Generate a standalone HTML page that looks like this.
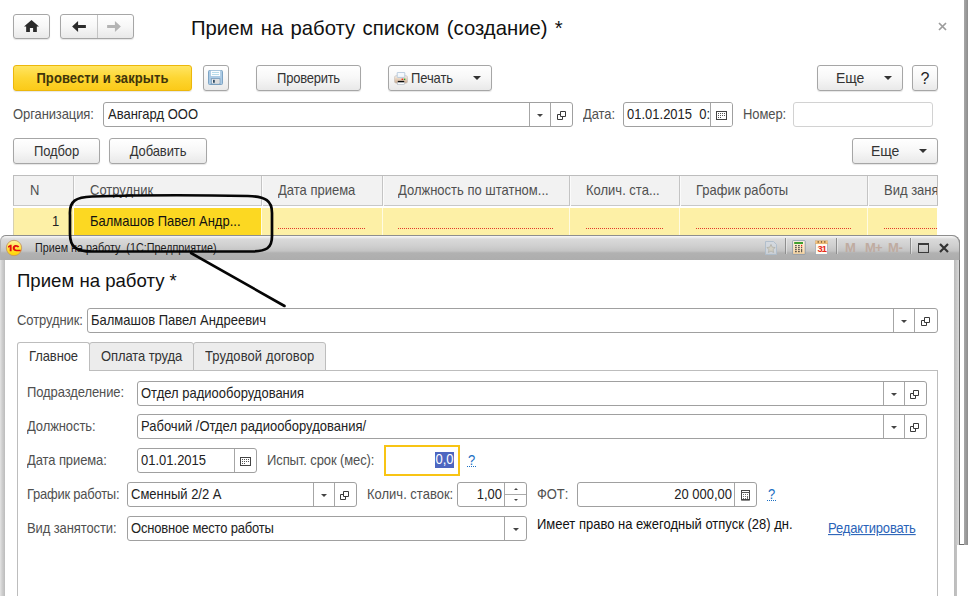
<!DOCTYPE html>
<html><head><meta charset="utf-8">
<style>
*{box-sizing:border-box;margin:0;padding:0}
html,body{width:968px;height:596px;overflow:hidden;background:#fff}
body{font-family:"Liberation Sans",sans-serif;font-size:13px;color:#333;position:relative}
.a{position:absolute}
.btn{position:absolute;border:1px solid #a6a6a6;border-radius:3px;background:linear-gradient(#ffffff 0%,#f7f7f7 50%,#e9e9e9 100%);text-align:center;color:#333;line-height:25px;height:26px;letter-spacing:-0.1px;box-shadow:0 1px 1px rgba(0,0,0,.10);white-space:nowrap}
.inp{position:absolute;border:1px solid #a0a0a0;border-radius:3px;background:#fff;height:25px;line-height:23px;color:#222;padding-left:3px;white-space:nowrap;overflow:hidden}
.lbl{position:absolute;color:#505050;white-space:nowrap;line-height:16px;letter-spacing:-0.1px;transform:scaleY(1.085);transform-origin:0 12.5px}
.sep{position:absolute;top:0;bottom:0;width:1px;background:#a6a6a6}
.tri{position:absolute;width:0;height:0;border-left:4px solid transparent;border-right:4px solid transparent;border-top:4px solid #333}
.tris{position:absolute;width:0;height:0;border-left:3px solid transparent;border-right:3px solid transparent;border-top:3px solid #444}
.q{position:absolute;color:#1b6ec2;line-height:16px;height:14px;width:9px;text-align:center;border-bottom:1px dotted #1b6ec2}
.q span{display:inline-block;line-height:16px;transform:scaleY(1.085);transform-origin:50% 12.5px}
.th{position:absolute;top:183px;color:#505050;white-space:nowrap;line-height:16px;transform:scaleY(1.085);transform-origin:0 12.5px}
.vs{position:absolute;top:176px;width:2px;height:30px;background:linear-gradient(90deg,#c4c4c4 50%,#fbfbfb 50%)}
.vs:after{content:"";position:absolute;left:0;top:32px;width:1px;height:27px;background:#fffbe2}
.red{position:absolute;top:228px;height:0;border-top:1px dotted #e03a2a}
.t{display:inline-block;line-height:16px;transform:scaleY(1.085);transform-origin:50% 12.5px}
.ty{transform:scaleY(1.085);transform-origin:0 12.5px}
</style></head><body>

<!-- main window right edge -->
<div class="a" style="left:964px;top:0;width:4px;height:545px;background:linear-gradient(90deg,#a8a8a8,#8e8e8e)"></div>

<!-- nav -->
<div class="btn" style="left:13px;top:14px;width:37px;height:25px">
<svg class="a" style="left:10px;top:5px" width="15" height="12.2" viewBox="0 0 16 13"><path d="M8 0 L0 7 L2.3 7 L2.3 13 L6.3 13 L6.3 8.5 L9.7 8.5 L9.7 13 L13.7 13 L13.7 7 L16 7 Z" fill="#2b2b2b"/></svg>
</div>
<div class="btn" style="left:60px;top:14px;width:74px;height:25px"><div class="sep" style="left:36px;background:#c4c4c4"></div>
<svg class="a" style="left:11px;top:6px" width="14" height="11" viewBox="0 0 15 12"><path d="M0 6 L6.5 0 L6.5 4.3 L15 4.3 L15 7.7 L6.5 7.7 L6.5 12 Z" fill="#2b2b2b"/></svg>
<svg class="a" style="left:46px;top:6px" width="14" height="11" viewBox="0 0 15 12"><path d="M15 6 L8.5 0 L8.5 4.3 L0 4.3 L0 7.7 L8.5 7.7 L8.5 12 Z" fill="#b4b4b4"/></svg>
</div>
<div class="a" style="left:191px;top:15px;font-size:20.3px;word-spacing:1.7px;line-height:26px;color:#111;white-space:nowrap">Прием на работу списком (создание) *</div>
<svg class="a" style="left:938px;top:22px" width="9" height="9" viewBox="0 0 9 9"><path d="M1 1 L8 8 M8 1 L1 8" stroke="#9c9c9c" stroke-width="1.7" fill="none"/></svg>

<!-- toolbar -->
<div class="btn" style="left:13px;top:65px;width:179px;border-color:#ecb70c;background:linear-gradient(#ffe562,#fdd632 50%,#fbca18);font-weight:bold;color:#40340a;letter-spacing:0.1px"><span class="t">Провести и закрыть</span></div>
<div class="btn" style="left:203px;top:65px;width:26px">
<svg class="a" style="left:4px;top:4px" width="15" height="15" viewBox="0 0 15 15"><rect x="0.5" y="0.5" width="14" height="14" rx="1" fill="#abcbe6" stroke="#7ea4c4"/><rect x="2.5" y="0.5" width="10" height="5.8" fill="#fbfdff" stroke="#9fc0da" stroke-width=".6"/><rect x="4" y="2" width="7" height="1" fill="#b8dcea"/><rect x="4" y="4" width="7" height="1" fill="#b8dcea"/><rect x="3.3" y="8.7" width="8.6" height="5.3" fill="#f0f0f0" stroke="#6f93b2" stroke-width=".8"/><rect x="5" y="9.8" width="1.8" height="3" fill="#2f4a62"/><rect x="7" y="9.5" width="4.4" height="4" fill="#dcdcdc"/></svg>
</div>
<div class="btn" style="left:256px;top:65px;width:105px;letter-spacing:-0.25px"><span class="t">Проверить</span></div>
<div class="btn" style="left:388px;top:65px;width:104px;text-align:left;padding-left:22px"><span class="t">Печать</span>
<svg class="a" style="left:5px;top:6px" width="14" height="13" viewBox="0 0 14 13"><defs><linearGradient id="pb" x1="0" y1="0" x2="0" y2="1"><stop offset="0" stop-color="#f6f4f2"/><stop offset=".35" stop-color="#ead8c6"/><stop offset="1" stop-color="#c9a98e"/></linearGradient></defs><rect x="0.4" y="3.6" width="13.2" height="7.6" rx="2" fill="url(#pb)" stroke="#c9c4c0" stroke-width=".7"/><rect x="3.2" y="0.4" width="7.6" height="5" rx=".6" fill="#f4f8fc" stroke="#a9c0d6" stroke-width=".8"/><rect x="3.8" y="8.9" width="6.4" height="1.6" fill="#0c0c0c"/><rect x="3.4" y="10.5" width="7.2" height="2" fill="#fdfdfd" stroke="#aab4be" stroke-width=".6"/><rect x="7.6" y="6.6" width="1.5" height="1.4" fill="#ee2a1c"/><rect x="9.8" y="6.6" width="1.5" height="1.4" fill="#2fa31f"/></svg>
<div class="tri" style="left:84px;top:10px"></div></div>
<div class="btn" style="left:817px;top:65px;width:86px;text-align:left;padding-left:18px;font-size:14px"><span class="t">Еще</span><div class="tri" style="left:66px;top:10px"></div></div>
<div class="btn" style="left:912px;top:65px;width:26px;font-size:16px;color:#222"><span class="t">?</span></div>

<!-- org row -->
<div class="lbl" style="left:13px;top:107px">Организация:</div>
<div class="inp" style="left:103px;top:102px;width:470px;padding-left:4px"><span class="t">Авангард ООО</span><div class="sep" style="left:425px"></div><div class="sep" style="left:446px"></div>
<div class="tris" style="left:433px;top:11px"></div>
<svg class="a" style="left:453px;top:8px" width="9" height="9" viewBox="0 0 9 9"><path d="M3.5 0.5 H8.5 V5.5 H3.5 Z M3.5 3.5 H0.5 V8.5 H5.5 V5.5" fill="none" stroke="#3a3a3a" stroke-width="1"/></svg>
</div>
<div class="lbl" style="left:583px;top:107px">Дата:</div>
<div class="inp" style="left:623px;top:102px;width:110px"><span class="t">01.01.2015&nbsp; 0:</span><div class="a" style="left:86px;top:0;width:24px;height:23px;background:#fff"></div><div class="sep" style="left:86px"></div>
<svg class="a" style="left:92px;top:8px" width="11" height="9" viewBox="0 0 11 9"><rect x="0.5" y="0.5" width="10" height="8" fill="#fff" stroke="#444"/><g fill="#555"><rect x="2" y="2" width="1" height="1"/><rect x="4" y="2" width="1" height="1"/><rect x="6" y="2" width="1" height="1"/><rect x="8" y="2" width="1" height="1"/><rect x="2" y="4" width="1" height="1"/><rect x="4" y="4" width="1" height="1"/><rect x="6" y="4" width="1" height="1"/><rect x="8" y="4" width="1" height="1"/><rect x="2" y="6" width="1" height="1"/><rect x="4" y="6" width="1" height="1"/></g></svg>
</div>
<div class="lbl" style="left:743px;top:107px">Номер:</div>
<div class="inp" style="left:793px;top:102px;width:140px;border-color:#d2d2d2"></div>

<!-- buttons row 2 -->
<div class="btn" style="left:13px;top:138px;width:87px"><span class="t">Подбор</span></div>
<div class="btn" style="left:109px;top:138px;width:98px"><span class="t">Добавить</span></div>
<div class="btn" style="left:852px;top:138px;width:86px;text-align:left;padding-left:18px;font-size:14px"><span class="t">Еще</span><div class="tri" style="left:66px;top:10px"></div></div>

<!-- table -->
<div class="a" style="left:13px;top:175px;width:925px;height:31px;background:#f2f2f2;border:1px solid #bdbdbd;border-bottom-color:#c8c8c8"></div>
<div class="a" style="left:13px;top:208px;width:924px;height:27px;background:#fdf0a6;border-left:1px solid #d6d0b0"></div>
<div class="a" style="left:74px;top:208px;width:187px;height:27px;background:#fcd822"></div>
<div class="vs" style="left:73px"></div><div class="vs" style="left:261px"></div><div class="vs" style="left:382px"></div><div class="vs" style="left:569px"></div><div class="vs" style="left:679px"></div><div class="vs" style="left:867px"></div>
<div class="th" style="left:30px">N</div>
<div class="th" style="left:90px">Сотрудник</div>
<div class="th" style="left:278px">Дата приема</div>
<div class="th" style="left:398px">Должность по штатном...</div>
<div class="th" style="left:586px">Колич. ста...</div>
<div class="th" style="left:696px">График работы</div>
<div class="th" style="left:884px;width:53px;overflow:hidden">Вид занятости</div>
<div class="a ty" style="left:52px;top:214px;line-height:16px;color:#222">1</div>
<div class="a ty" style="left:90px;top:214px;line-height:16px;color:#111;white-space:nowrap">Балмашов Павел Андр...</div>
<div class="red" style="left:278px;width:87px"></div>
<div class="red" style="left:398px;width:155px"></div>
<div class="red" style="left:586px;width:77px"></div>
<div class="red" style="left:696px;width:155px"></div>
<div class="red" style="left:884px;width:53px"></div>

<!-- modal frame -->
<div class="a" style="left:0;top:235px;width:960px;height:310px;background:linear-gradient(90deg,#e4e4e4 0,#d0d0d0 2px,#bcbcbc 5px,#bcbcbc 954px,#bdbdbd 955px,#dadada 959px,#6c6c6c 959px);border-radius:6px 8px 0 0"></div>
<div class="a" style="left:959px;top:544px;width:5px;height:1px;background:#6c6c6c"></div>
<div class="a" style="left:0;top:545px;width:957px;height:51px;background:linear-gradient(90deg,#e4e4e4 0,#d0d0d0 2px,#bcbcbc 5px,#bcbcbc 954px,#c2c2c2 957px)"></div>
<div class="a" style="left:0;top:235px;width:960px;height:25px;border-radius:6px 8px 0 0;border:1px solid #8e8e8e;border-bottom:0;border-left-color:#b0b0b0;background:linear-gradient(#f6f6f6 0,#f0f0f0 1px,#dadada 3px,#cfcfcf 10px,#c4c4c4 15px,#b1b1b1 17px,#adadad 24px)"></div>
<div class="a" style="left:5px;top:260px;width:949px;height:336px;background:#fff"></div>

<!-- modal title bar content -->
<svg class="a" style="left:5px;top:239px" width="18" height="18" viewBox="0 0 18 18"><defs><linearGradient id="g1c" x1="0" y1="0" x2="0" y2="1"><stop offset="0" stop-color="#fff3a0"/><stop offset=".55" stop-color="#ffe23a"/><stop offset="1" stop-color="#ffd400"/></linearGradient></defs><circle cx="9" cy="9" r="7.7" fill="url(#g1c)" stroke="#c4956a" stroke-width=".9"/><path d="M3 7.2 L5.4 5.8 L6.6 5.8 L6.6 12.2 L4.7 12.2 L4.7 8 L3 8.8 Z" fill="#e20d0d"/><path d="M14.3 7.8 C13.4 6.1 11.2 5.4 9.4 6.3 C7.3 7.4 7.1 10.2 8.9 11.5 C9.7 12.1 10.6 12.3 11.5 12.3 L15.6 12.3 L15.6 10.7 L11.7 10.7 C10.6 10.7 9.8 10.1 9.8 9.1 C9.8 7.6 11.7 7.1 12.8 8.6 Z" fill="#e20d0d"/></svg>
<div class="a" style="left:35px;top:241px;font-size:12px;line-height:14px;color:#1a1a1a;white-space:nowrap;transform:scaleX(.897);transform-origin:0 0">Прием на работу&nbsp; (1С:Предприятие)</div>

<!-- title bar icons -->
<svg class="a" style="left:765px;top:241px" width="12" height="14" viewBox="0 0 12 14"><path d="M0.5 0.5 H8.5 L11.5 3.5 V13.5 H0.5 Z" fill="#d3dae2" fill-opacity=".75" stroke="#aebccb" stroke-width=".9"/><path d="M6 3.4 L7.3 6.2 L10.2 6.5 L8 8.5 L8.6 11.5 L6 10 L3.4 11.5 L4 8.5 L1.8 6.5 L4.7 6.2 Z" fill="#d2cfc4" stroke="#aeaca4" stroke-width=".7"/></svg>
<div class="a" style="left:785px;top:238px;width:1px;height:16px;background:#8e8e8e"></div>
<div class="a" style="left:786px;top:238px;width:1px;height:16px;background:rgba(255,255,255,.4)"></div>
<svg class="a" style="left:792px;top:240px" width="14" height="15" viewBox="0 0 14 15"><defs><linearGradient id="cg" x1="0" y1="0" x2="0" y2="1"><stop offset="0" stop-color="#fff6e4"/><stop offset="1" stop-color="#f7d4a0"/></linearGradient></defs><rect x="0.6" y="0.6" width="12.6" height="13.8" rx=".8" fill="url(#cg)" stroke="#8193a8" stroke-width=".8"/><rect x="2.2" y="2" width="8.8" height="2" fill="#3f9f2e"/><g fill="#3a3a3a"><rect x="3" y="5.2" width="1.8" height="1"/><rect x="6" y="5.2" width="1.8" height="1"/><rect x="3" y="7.2" width="1.8" height="1"/><rect x="6" y="7.2" width="1.8" height="1"/><rect x="9" y="7.2" width="1.2" height="1"/><rect x="3" y="9.2" width="1.8" height="1"/><rect x="6" y="9.2" width="1.8" height="1"/><rect x="9" y="9.2" width="1.2" height="1.6"/><rect x="3" y="11.2" width="1.8" height="1"/><rect x="6" y="11.2" width="1.8" height="1"/><rect x="9" y="11.2" width="1.2" height="1"/></g><rect x="9" y="4.9" width="1.2" height="1.5" fill="#e0281c"/></svg>
<svg class="a" style="left:815px;top:240px" width="13" height="15" viewBox="0 0 13 15"><rect x="0.5" y="0.8" width="12" height="13.6" fill="#fffaf0" stroke="#9aa4b0" stroke-width=".7"/><rect x="0.3" y="0.5" width="12.4" height="3" fill="#f6c27a"/><rect x="0.3" y="3.3" width="12.4" height=".6" fill="#e0a050"/><g fill="#3a2a1a"><rect x="2.6" y="1.4" width="1.2" height="1.1"/><rect x="5.9" y="1.4" width="1.2" height="1.1"/><rect x="9.2" y="1.4" width="1.2" height="1.1"/></g><text x="2.5" y="12.3" font-family="Liberation Sans" font-weight="bold" font-size="9.3" fill="#e62a1a" letter-spacing="-0.8">31</text></svg>
<div class="a" style="left:836px;top:238px;width:1px;height:16px;background:#8e8e8e"></div>
<div class="a" style="left:837px;top:238px;width:1px;height:16px;background:rgba(255,255,255,.4)"></div>
<div class="a" style="left:845px;top:240px;font-size:13px;font-weight:bold;line-height:16px;color:#bfaba0;white-space:nowrap;letter-spacing:-0.3px">M</div>
<div class="a" style="left:865px;top:240px;font-size:13px;font-weight:bold;line-height:16px;color:#bfaba0;white-space:nowrap;letter-spacing:-0.8px">M+</div>
<div class="a" style="left:888px;top:240px;font-size:13px;font-weight:bold;line-height:16px;color:#bfaba0;white-space:nowrap;letter-spacing:-0.3px">M-</div>
<div class="a" style="left:910px;top:238px;width:1px;height:16px;background:#8e8e8e"></div>
<div class="a" style="left:911px;top:238px;width:1px;height:16px;background:rgba(255,255,255,.4)"></div>
<div class="a" style="left:918px;top:243px;width:11px;height:10px;border:1px solid #3a3a3a;border-top-width:2px"></div>
<svg class="a" style="left:939px;top:243px" width="10" height="10" viewBox="0 0 10 10"><path d="M1 1 L9 9 M9 1 L1 9" stroke="#333" stroke-width="2.2" fill="none"/></svg>

<!-- modal title -->
<div class="a" style="left:17px;top:269px;font-size:18.6px;line-height:24px;color:#111;white-space:nowrap">Прием на работу *</div>

<!-- Сотрудник -->
<div class="lbl" style="left:17px;top:313px">Сотрудник:</div>
<div class="inp" style="left:87px;top:308px;width:851px"><span class="t">Балмашов Павел Андреевич</span><div class="sep" style="left:805px"></div><div class="sep" style="left:826px"></div>
<div class="tris" style="left:813px;top:11px"></div>
<svg class="a" style="left:833px;top:8px" width="9" height="9" viewBox="0 0 9 9"><path d="M3.5 0.5 H8.5 V5.5 H3.5 Z M3.5 3.5 H0.5 V8.5 H5.5 V5.5" fill="none" stroke="#3a3a3a" stroke-width="1"/></svg>
</div>

<!-- tabs + panel -->
<div class="a" style="left:17px;top:370px;width:921px;height:230px;border:1px solid #bdbdbd;background:#fff"></div>
<div class="a" style="left:89px;top:342px;width:105px;height:29px;background:#ececec;border:1px solid #bdbdbd;border-radius:3px 3px 0 0"></div>
<div class="a" style="left:193px;top:342px;width:133px;height:29px;background:#ececec;border:1px solid #bdbdbd;border-radius:3px 3px 0 0"></div>
<div class="a" style="left:17px;top:342px;width:73px;height:29px;background:#fff;border:1px solid #bdbdbd;border-bottom:0;border-radius:3px 3px 0 0"></div>
<div class="lbl" style="left:29px;top:349px;color:#333">Главное</div>
<div class="lbl" style="left:101px;top:349px;color:#333">Оплата труда</div>
<div class="lbl" style="left:205px;top:349px;color:#333;letter-spacing:0.1px">Трудовой договор</div>

<!-- form rows -->
<div class="lbl" style="left:27px;top:385px">Подразделение:</div>
<div class="inp" style="left:137px;top:381px;width:790px"><span class="t">Отдел радиооборудования</span><div class="sep" style="left:745px"></div><div class="sep" style="left:766px"></div>
<div class="tris" style="left:753px;top:11px"></div>
<svg class="a" style="left:772px;top:8px" width="9" height="9" viewBox="0 0 9 9"><path d="M3.5 0.5 H8.5 V5.5 H3.5 Z M3.5 3.5 H0.5 V8.5 H5.5 V5.5" fill="none" stroke="#3a3a3a" stroke-width="1"/></svg>
</div>

<div class="lbl" style="left:27px;top:419px">Должность:</div>
<div class="inp" style="left:137px;top:414px;width:790px"><span class="t">Рабочий /Отдел радиооборудования/</span><div class="sep" style="left:745px"></div><div class="sep" style="left:766px"></div>
<div class="tris" style="left:753px;top:11px"></div>
<svg class="a" style="left:772px;top:8px" width="9" height="9" viewBox="0 0 9 9"><path d="M3.5 0.5 H8.5 V5.5 H3.5 Z M3.5 3.5 H0.5 V8.5 H5.5 V5.5" fill="none" stroke="#3a3a3a" stroke-width="1"/></svg>
</div>

<div class="lbl" style="left:27px;top:453px">Дата приема:</div>
<div class="inp" style="left:137px;top:448px;width:120px"><span class="t">01.01.2015</span><div class="sep" style="left:96px"></div>
<svg class="a" style="left:102px;top:8px" width="11" height="9" viewBox="0 0 11 9"><rect x="0.5" y="0.5" width="10" height="8" fill="#fff" stroke="#444"/><g fill="#555"><rect x="2" y="2" width="1" height="1"/><rect x="4" y="2" width="1" height="1"/><rect x="6" y="2" width="1" height="1"/><rect x="8" y="2" width="1" height="1"/><rect x="2" y="4" width="1" height="1"/><rect x="4" y="4" width="1" height="1"/><rect x="6" y="4" width="1" height="1"/><rect x="8" y="4" width="1" height="1"/><rect x="2" y="6" width="1" height="1"/><rect x="4" y="6" width="1" height="1"/></g></svg>
</div>
<div class="lbl" style="left:267px;top:453px">Испыт. срок (мес):</div>
<div class="a" style="left:384px;top:445px;width:76px;height:31px;border:2px solid #f8c414;background:#fff"></div>
<div class="a" style="left:435px;top:452px;width:19px;height:16px;background:#4d66c0;color:#fff;line-height:16px;text-align:center"><span class="t">0,0</span></div>
<div class="q" style="left:467px;top:453px"><span>?</span></div>

<div class="lbl" style="left:27px;top:487px;letter-spacing:-0.25px">График работы:</div>
<div class="inp" style="left:127px;top:482px;width:230px"><span class="t">Сменный 2/2 А</span><div class="sep" style="left:185px"></div><div class="sep" style="left:206px"></div>
<div class="tris" style="left:193px;top:11px"></div>
<svg class="a" style="left:212px;top:8px" width="9" height="9" viewBox="0 0 9 9"><path d="M3.5 0.5 H8.5 V5.5 H3.5 Z M3.5 3.5 H0.5 V8.5 H5.5 V5.5" fill="none" stroke="#3a3a3a" stroke-width="1"/></svg>
</div>
<div class="lbl" style="left:367px;top:487px;letter-spacing:0">Колич. ставок:</div>
<div class="inp" style="left:457px;top:482px;width:70px;padding-left:0"><div class="a" style="left:0;top:0;width:44px;text-align:right"><span class="t">1,00</span></div><div class="sep" style="left:46px"></div><div class="a" style="left:47px;top:11px;width:22px;height:1px;background:#ababab"></div>
<div class="a" style="left:55.5px;top:5px;width:0;height:0;border-left:2px solid transparent;border-right:2px solid transparent;border-bottom:2.5px solid #444"></div>
<div class="a" style="left:55.5px;top:16px;width:0;height:0;border-left:2px solid transparent;border-right:2px solid transparent;border-top:2.5px solid #444"></div>
</div>
<div class="lbl" style="left:537px;top:487px">ФОТ:</div>
<div class="inp" style="left:577px;top:482px;width:180px;padding-left:0"><div class="a" style="left:0;top:0;width:154px;text-align:right"><span class="t">20 000,00</span></div><div class="sep" style="left:156px"></div>
<svg class="a" style="left:163px;top:7px" width="9" height="11" viewBox="0 0 9 11"><rect x="0.5" y="0.5" width="8" height="9.5" fill="#fff" stroke="#444"/><rect x="0" y="2" width="9" height="1" fill="#555"/><rect x="0" y="9" width="9" height="1" fill="#444"/><rect x="1" y="10" width="7" height="1" fill="#8a8a8a"/><g fill="#707070"><rect x="2" y="4" width="1" height="1"/><rect x="4" y="4" width="1" height="1"/><rect x="6" y="4" width="1" height="1"/><rect x="2" y="6" width="1" height="1"/><rect x="4" y="6" width="1" height="1"/><rect x="2" y="8" width="1" height="1"/><rect x="4" y="8" width="1" height="1"/><rect x="6" y="6" width="1" height="3"/></g></svg>
</div>
<div class="q" style="left:767px;top:487px"><span>?</span></div>

<div class="lbl" style="left:27px;top:521px">Вид занятости:</div>
<div class="inp" style="left:127px;top:516px;width:400px"><span class="t" style="letter-spacing:-0.19px">Основное место работы</span><div class="sep" style="left:376px"></div><div class="tris" style="left:385px;top:11px"></div></div>
<div class="a ty" style="left:537px;top:517px;line-height:16px;color:#111;white-space:nowrap">Имеет право на ежегодный отпуск (28) дн.</div>
<div class="a ty" style="left:828px;top:521px;line-height:16px;color:#2a63b8;text-decoration:underline;white-space:nowrap;letter-spacing:-0.16px">Редактировать</div>

<!-- annotation -->
<svg class="a" style="left:0;top:0" width="968" height="596" viewBox="0 0 968 596"><path d="M70 215 C69 201 76 197 92 196.5 C140 195 200 195 248 196 C266 196.5 272 201 272 213 L272 236 C272 248 267 251.5 250 251.5 L92 251.5 C76 251.5 70 247 70 234 Z" fill="none" stroke="#050505" stroke-width="2.7" stroke-linejoin="round"/><path d="M191 253 L284.5 306" fill="none" stroke="#050505" stroke-width="2.6" stroke-linecap="round"/></svg>

</body></html>
